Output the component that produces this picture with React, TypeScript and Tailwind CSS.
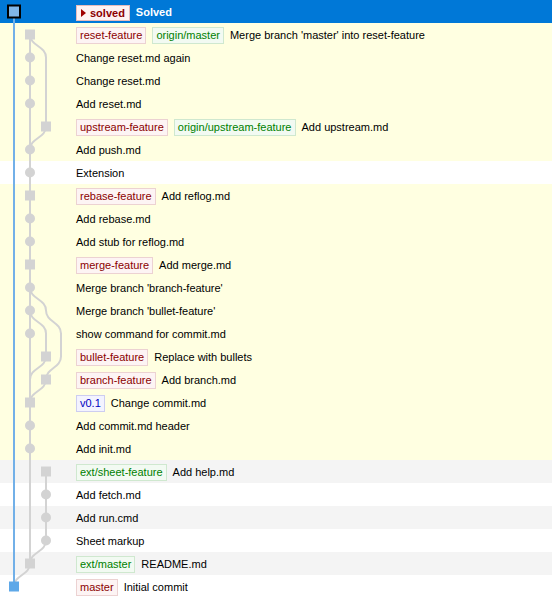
import React from 'react';

type LabelKind = 'branch' | 'remote' | 'tag';

interface Label {
  text: string;
  kind: LabelKind;
}

interface Row {
  msg: string;
  labels?: Label[];
  bg: 'sel' | 'yellow' | 'white' | 'gray';
}

const b = (text: string): Label => ({ text, kind: 'branch' });
const r = (text: string): Label => ({ text, kind: 'remote' });
const t = (text: string): Label => ({ text, kind: 'tag' });

const rows: Row[] = [
  { msg: 'Solved', bg: 'sel' },
  { msg: "Merge branch 'master' into reset-feature", labels: [b('reset-feature'), r('origin/master')], bg: 'yellow' },
  { msg: 'Change reset.md again', bg: 'yellow' },
  { msg: 'Change reset.md', bg: 'yellow' },
  { msg: 'Add reset.md', bg: 'yellow' },
  { msg: 'Add upstream.md', labels: [b('upstream-feature'), r('origin/upstream-feature')], bg: 'yellow' },
  { msg: 'Add push.md', bg: 'yellow' },
  { msg: 'Extension', bg: 'white' },
  { msg: 'Add reflog.md', labels: [b('rebase-feature')], bg: 'yellow' },
  { msg: 'Add rebase.md', bg: 'yellow' },
  { msg: 'Add stub for reflog.md', bg: 'yellow' },
  { msg: 'Add merge.md', labels: [b('merge-feature')], bg: 'yellow' },
  { msg: "Merge branch 'branch-feature'", bg: 'yellow' },
  { msg: "Merge branch 'bullet-feature'", bg: 'yellow' },
  { msg: 'show command for commit.md', bg: 'yellow' },
  { msg: 'Replace with bullets', labels: [b('bullet-feature')], bg: 'yellow' },
  { msg: 'Add branch.md', labels: [b('branch-feature')], bg: 'yellow' },
  { msg: 'Change commit.md', labels: [t('v0.1')], bg: 'yellow' },
  { msg: 'Add commit.md header', bg: 'yellow' },
  { msg: 'Add init.md', bg: 'yellow' },
  { msg: 'Add help.md', labels: [r('ext/sheet-feature')], bg: 'gray' },
  { msg: 'Add fetch.md', bg: 'white' },
  { msg: 'Add run.cmd', bg: 'gray' },
  { msg: 'Sheet markup', bg: 'white' },
  { msg: 'README.md', labels: [r('ext/master')], bg: 'gray' },
  { msg: 'Initial commit', labels: [b('master')], bg: 'white' },
];

const bgClass = {
  sel: 'bg-[#0078d7]',
  yellow: 'bg-[#ffffe1]',
  white: 'bg-white',
  gray: 'bg-[#f4f4f4]',
};

const labelClass = {
  branch: 'text-[#8b0000] bg-[#fdf4f4] border-[#ecd2d2]',
  remote: 'text-[#008000] bg-[#f2faf2] border-[#cfe8cf]',
  tag: 'text-[#0000c0] bg-[#f3f3ff] border-[#cdcdf0]',
};

// lanes
const L0 = 14;
const L1 = 30;
const L2 = 46;
const L3 = 61;
const cy = (i: number) => i * 23 + 11.5;

// node per row: [row, lane x, shape]
const nodes: Array<[number, number, 'sq' | 'dot']> = [
  [1, L1, 'sq'], [2, L1, 'dot'], [3, L1, 'dot'], [4, L1, 'dot'], [5, L2, 'sq'],
  [6, L1, 'dot'], [7, L1, 'dot'], [8, L1, 'sq'], [9, L1, 'dot'], [10, L1, 'dot'],
  [11, L1, 'sq'], [12, L1, 'dot'], [13, L1, 'dot'], [14, L1, 'dot'], [15, L2, 'sq'],
  [16, L2, 'sq'], [17, L1, 'sq'], [18, L1, 'dot'], [19, L1, 'dot'], [20, L2, 'sq'],
  [21, L2, 'dot'], [22, L2, 'dot'], [23, L2, 'dot'], [24, L1, 'sq'],
];

// S-curve from (x1,row i) to (x2,row i+1)
const hop = (x1: number, x2: number, i: number) => {
  const y1 = cy(i);
  const m = y1 + 11.5;
  return `C${x1} ${m} ${x2} ${m} ${x2} ${y1 + 23}`;
};

const Graph: React.FC = () => {
  const gray = '#d3d3d3';
  return (
    <svg className="absolute left-0 top-0" width="80" height="598" viewBox="0 0 80 598">
      <g fill="none" stroke={gray} strokeWidth="2">
        <path d={`M${L1} ${cy(1)} L${L1} ${cy(24)}`} />
        <path d={`M${L1} ${cy(1)} ${hop(L1, L2, 1)} L${L2} ${cy(5)} ${hop(L2, L1, 5)}`} />
        <path d={`M${L1} ${cy(12)} ${hop(L1, L2, 12)} ${hop(L2, L3, 13)} L${L3} ${cy(15)} ${hop(L3, L2, 15)} ${hop(L2, L1, 16)}`} />
        <path d={`M${L1} ${cy(13)} ${hop(L1, L2, 13)} L${L2} ${cy(15)} ${hop(L2, L1, 15)}`} />
        <path d={`M${L2} ${cy(20)} L${L2} ${cy(23)} ${hop(L2, L1, 23)} ${hop(L1, L0, 24)}`} />
      </g>
      <path d={`M${L0} ${cy(0)} L${L0} ${cy(25)}`} stroke="#72b0e8" strokeWidth="2" fill="none" />
      <g fill={gray}>
        {nodes.map(([i, x, s]) =>
          s === 'sq' ? (
            <rect key={i} x={x - 5} y={cy(i) - 5} width="10" height="10" />
          ) : (
            <circle key={i} cx={x} cy={cy(i)} r="5" />
          )
        )}
      </g>
      <rect x={L0 - 6} y={cy(0) - 6} width="12" height="12" fill="#80b6e8" stroke="#000" strokeWidth="2" />
      <rect x={L0 - 5} y={cy(25) - 5} width="10" height="10" fill="#5ea8e8" />
    </svg>
  );
};

const RefLabel: React.FC<{ label: Label }> = ({ label }) => (
  <span className={`h-[17px] px-[3px] border leading-[15px] whitespace-nowrap ${labelClass[label.kind]}`}>
    {label.text}
  </span>
);

export default function App() {
  return (
    <div className="relative w-[552px] h-[607px] bg-white font-['Liberation_Sans',Arial,sans-serif] text-[11px] text-black">
      <div className="flex flex-col">
        {rows.map((row, i) => (
          <div key={i} className={`h-[23px] flex items-center gap-[6px] pl-[76px] pt-[2px] ${bgClass[row.bg]}`}>
            {row.bg === 'sel' ? (
              <>
                <span className="h-[16px] flex items-center gap-[4px] px-[4px] border border-[#e6bcbc] bg-[#fdf3f3] text-[#8b0000] font-bold leading-[14px]">
                  <svg width="5" height="8" viewBox="0 0 5 8">
                    <polygon points="0,0 5,4 0,8" fill="#a00000" />
                  </svg>
                  solved
                </span>
                <span className="font-bold text-white">{row.msg}</span>
              </>
            ) : (
              <>
                {row.labels?.map((l) => <RefLabel key={l.text} label={l} />)}
                <span className="whitespace-nowrap">{row.msg}</span>
              </>
            )}
          </div>
        ))}
      </div>
      <Graph />
    </div>
  );
}
